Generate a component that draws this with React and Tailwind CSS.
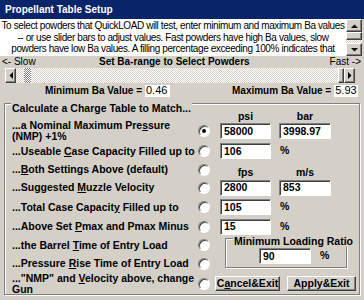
import React from "react";

const raised =
  "bg-[#d4d0c8] border border-t-white border-l-white border-r-[#404040] border-b-[#404040] shadow-[inset_-1px_-1px_0_#808080]";
const sunken =
  "bg-white border border-t-[#808080] border-l-[#808080] border-r-white border-b-white shadow-[inset_1px_1px_0_#404040]";
const checker =
  "bg-[conic-gradient(#ffffff_25%,#d4d0c8_0_50%,#ffffff_0_75%,#d4d0c8_0)] bg-[length:2px_2px]";
const darkChecker =
  "bg-[conic-gradient(#808080_25%,#ffffff_0_50%,#808080_0_75%,#ffffff_0)] bg-[length:2px_2px]";

function Tri({ dir }) {
  if (dir === "left")
    return (
      <svg width="4" height="7" viewBox="0 0 4 7">
        <polygon points="4,0 4,7 0.5,3.5" fill="#000" />
      </svg>
    );
  if (dir === "right")
    return (
      <svg width="4" height="7" viewBox="0 0 4 7">
        <polygon points="0,0 0,7 3.5,3.5" fill="#000" />
      </svg>
    );
  if (dir === "up")
    return (
      <svg width="7" height="4" viewBox="0 0 7 4">
        <polygon points="0,4 7,4 3.5,0.5" fill="#000" />
      </svg>
    );
  return (
    <svg width="7" height="4" viewBox="0 0 7 4">
      <polygon points="0,0 7,0 3.5,3.5" fill="#000" />
    </svg>
  );
}

function Radio({ checked }) {
  return (
    <div className="w-[12px] h-[12px] shrink-0 rounded-full bg-white border border-t-[#808080] border-l-[#808080] border-r-white border-b-white shadow-[inset_1px_1px_0_#404040] flex items-center justify-center">
      {checked && <div className="w-[4px] h-[4px] rounded-full bg-black" />}
    </div>
  );
}

function Field({ className, children }) {
  return (
    <div
      className={`h-[16px] shrink-0 ${sunken} flex items-center pl-[3px] text-[10.5px] font-bold leading-none ${className}`}
    >
      {children}
    </div>
  );
}

function Row({ h, label, checked, children }) {
  return (
    <div className={`flex items-center ${h}`}>
      <div className="w-[193px] shrink-0 pl-[7px] font-bold text-[10.5px] leading-[11px] whitespace-nowrap overflow-hidden">
        {label}
      </div>
      <Radio checked={checked} />
      <div className="ml-[10px] flex items-center gap-[8px] h-full">{children}</div>
    </div>
  );
}

function Pct() {
  return <span className="font-bold text-[10.5px] ml-[1px]">%</span>;
}

export default function App() {
  return (
    <div className="w-[364px] h-[300px] bg-[#d4d0c8] overflow-hidden font-['Liberation_Sans',Arial,sans-serif] text-black flex flex-col">
      {/* title */}
      <div className="h-[19px] shrink-0 bg-[#0a246a] text-white font-bold text-[10px] pl-[5px] flex items-center">
        Propellant Table Setup
      </div>

      {/* text box */}
      <div className="h-[37px] shrink-0 flex">
        <div className="w-[346px] bg-white text-center text-[10px] tracking-[-0.4px] leading-[11.5px] pt-[1px] overflow-hidden whitespace-nowrap">
          To select powders that QuickLOAD will test, enter minimum and maximum Ba values
          <br />
          -- or use slider bars to adjust values. Fast powders have high Ba values, slow
          <br />
          powders have low Ba values. A filling percentage exceeding 100% indicates that
        </div>
        <div className="w-[16px] flex flex-col bg-white">
          <div className={`h-[13px] ${raised} flex items-center justify-center`}>
            <Tri dir="up" />
          </div>
          <div className={`h-[8px] ${raised}`} />
          <div className={`flex-1 ${checker}`} />
          <div className={`h-[13px] ${raised} flex items-center justify-center`}>
            <Tri dir="down" />
          </div>
        </div>
      </div>

      {/* slider labels */}
      <div className="h-[12px] shrink-0 flex items-center text-[10px] leading-none pl-[2px] pr-[3px]">
        <span className="w-[97px]">&lt;- Slow</span>
        <span className="font-bold">Set Ba-range to Select Powders</span>
        <span className="ml-auto whitespace-nowrap">Fast -&gt;</span>
      </div>

      {/* slider */}
      <div className="h-[15px] shrink-0 flex ml-[5px] w-[350px]">
        <div className={`w-[11px] ${raised} flex items-center justify-center`}>
          <Tri dir="left" />
        </div>
        <div className={`flex-1 flex ${checker}`}>
          <div className={`ml-[8px] w-[7px] ${darkChecker}`} />
          <div className={`ml-auto w-[6px] ${raised}`} />
        </div>
        <div className={`w-[11px] ${raised} flex items-center justify-center`}>
          <Tri dir="right" />
        </div>
      </div>

      {/* min / max */}
      <div className="h-[15px] shrink-0 flex items-center text-[10px] font-bold">
        <span className="ml-[45px]">Minimum Ba Value =</span>
        <div className="ml-[3px] w-[25px] h-[12px] bg-white flex items-center pl-[1px] text-[11px] font-normal">
          0.46
        </div>
        <span className="ml-[62px]">Maximum Ba Value =</span>
        <div className="ml-[3px] w-[24px] h-[12px] bg-white flex items-center pl-[1px] text-[11px] font-normal">
          5.93
        </div>
      </div>

      {/* group */}
      <div className="relative mt-[5px] mx-[4px] border border-[#808080] shadow-[inset_1px_1px_0_#fff,1px_1px_0_#fff] flex flex-col pt-[7px]">
        <div className="absolute left-[6px] top-[-1px] px-[1px] bg-[#d4d0c8] font-bold text-[10.5px] leading-[11px]">
          Calculate a Charge Table to Match...
        </div>

        {/* psi / bar header */}
        <div className="h-[10px] flex items-center font-bold text-[10.5px] leading-none">
          <div className="w-[215px] shrink-0" />
          <div className="w-[51px] text-center">psi</div>
          <div className="ml-[8px] w-[52px] text-center">bar</div>
        </div>

        <Row
          h="h-[20px]"
          checked
          label={
            <>
              ...a Nominal Maximum Pre<u>s</u>sure
              <br />
              (NMP) +1%
            </>
          }
        >
          <Field className="w-[51px]">58000</Field>
          <Field className="w-[52px]">3998.97</Field>
        </Row>

        <Row
          h="h-[20px]"
          label={
            <>
              ...Useable <u>C</u>ase Capacity Filled up to
            </>
          }
        >
          <Field className="w-[51px]">106</Field>
          <Pct />
        </Row>

        <Row
          h="h-[17px]"
          label={
            <>
              ...<u>B</u>oth Settings Above (default)
            </>
          }
        >
          <div className="h-full flex items-end font-bold text-[10.5px] leading-[11px] gap-[8px]">
            <div className="w-[51px] text-center">fps</div>
            <div className="w-[52px] text-center">m/s</div>
          </div>
        </Row>

        <Row
          h="h-[19px]"
          label={
            <>
              ...Suggested <u>M</u>uzzle Velocity
            </>
          }
        >
          <Field className="w-[51px]">2800</Field>
          <Field className="w-[52px]">853</Field>
        </Row>

        <Row
          h="h-[20px]"
          label={
            <>
              ...Total Case Capacit<u>y</u> Filled up to
            </>
          }
        >
          <Field className="w-[51px]">105</Field>
          <Pct />
        </Row>

        <Row
          h="h-[19px]"
          label={
            <>
              ...Above Set <u>P</u>max and Pmax Minus
            </>
          }
        >
          <Field className="w-[51px]">15</Field>
          <Pct />
        </Row>

        {/* rows 7 & 8 with loading ratio box */}
        <div className="h-[37px] flex">
          <div className="flex flex-col">
            <div className="h-[18px] flex items-center">
              <div className="w-[193px] shrink-0 pl-[7px] font-bold text-[10.5px] leading-[11px] whitespace-nowrap overflow-hidden">
                ...the Barrel <u>T</u>ime of Entry Load
              </div>
              <Radio />
            </div>
            <div className="h-[19px] flex items-center">
              <div className="w-[193px] shrink-0 pl-[7px] font-bold text-[10.5px] leading-[11px] whitespace-nowrap overflow-hidden">
                ...Pressure <u>R</u>ise Time of Entry Load
              </div>
              <Radio />
            </div>
          </div>
          <div className="relative ml-[15px] mt-[2px] w-[122px] h-[30px] border border-[#808080] shadow-[inset_1px_1px_0_#fff,1px_1px_0_#fff] flex items-start">
            <div className="absolute left-[7px] top-[-3px] px-[1px] bg-[#d4d0c8] font-bold text-[10.5px] leading-[11px] whitespace-nowrap">
              Minimum Loading Ratio
            </div>
            <div className="mt-[9px] ml-[33px] flex items-center gap-[8px]">
              <Field className="w-[52px]">90</Field>
              <Pct />
            </div>
          </div>
        </div>

        {/* row 9 */}
        <div className="h-[21px] flex items-center">
          <div className="w-[193px] shrink-0 pl-[7px] font-bold text-[10.5px] leading-[11px] whitespace-nowrap overflow-hidden">
            ..."NMP" and <u>V</u>elocity above, change
            <br />
            Gun
          </div>
          <Radio />
          <div className="ml-[5px] flex gap-[7px]">
            <div className={`w-[65px] h-[15px] ${raised} flex items-center justify-center font-bold text-[10.5px] leading-none`}>
              C<u>a</u>ncel&amp;Exit
            </div>
            <div className={`w-[69px] h-[15px] ${raised} flex items-center justify-center font-bold text-[10.5px] leading-none`}>
              Apply&amp;Exit
            </div>
          </div>
        </div>
      </div>
    </div>
  );
}
